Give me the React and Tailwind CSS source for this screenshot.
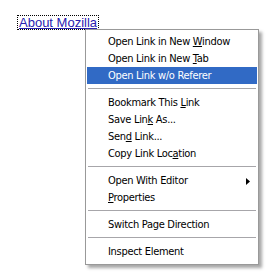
import React from "react";

const U = ({ children }) => <span className="underline underline-offset-[1px]">{children}</span>;

function Item({ children, active, arrow }) {
  return (
    <div
      className={
        "relative flex h-[17px] items-center pl-[21px] pr-2 pt-px whitespace-nowrap " +
        (active ? "bg-[#316ac5] text-white" : "text-black")
      }
    >
      <span>{children}</span>
      {arrow && (
        <svg className="absolute right-[7px] top-[6px]" width="4" height="7" viewBox="0 0 4 7">
          <path d="M0 0 L4 3.5 L0 7 Z" fill="#000" />
        </svg>
      )}
    </div>
  );
}

function Sep() {
  return (
    <div className="flex h-[10px] items-start pt-[4px] px-[1px]">
      <div className="h-px w-full bg-[#a7a6aa]" />
    </div>
  );
}

export default function App() {
  return (
    <div className="relative h-[278px] w-[280px] bg-white font-['Liberation_Sans',Arial,sans-serif]">
      <div className="flex items-start pl-[17px] pt-[15px]">
        <span className="flex h-[15px] items-center border border-dotted border-black px-[1px] text-[13px] leading-[13px] text-[#2a22b0] underline">
          About Mozilla
        </span>
      </div>
      <div className="absolute left-[85px] top-[29px] w-[174px] border border-[#999999] bg-white px-px pt-[3px] pb-[4px] text-[11px] tracking-[-0.3px] font-['DejaVu_Sans_Condensed','Liberation_Sans',sans-serif] shadow-[3px_3px_3px_rgba(0,0,0,0.35)]">
        <Item>Open Link in New <U>W</U>indow</Item>
        <Item>Open Link in New <U>T</U>ab</Item>
        <Item active>Open Link w/o Referer</Item>
        <Sep />
        <Item>Bookmark This <U>L</U>ink</Item>
        <Item>Save Lin<U>k</U> As...</Item>
        <Item>Sen<U>d</U> Link...</Item>
        <Item>Copy Link Loc<U>a</U>tion</Item>
        <Sep />
        <Item arrow>Open With Editor</Item>
        <Item><U>P</U>roperties</Item>
        <Sep />
        <Item>Switch Page Direction</Item>
        <Sep />
        <Item>Inspect Element</Item>
      </div>
    </div>
  );
}
